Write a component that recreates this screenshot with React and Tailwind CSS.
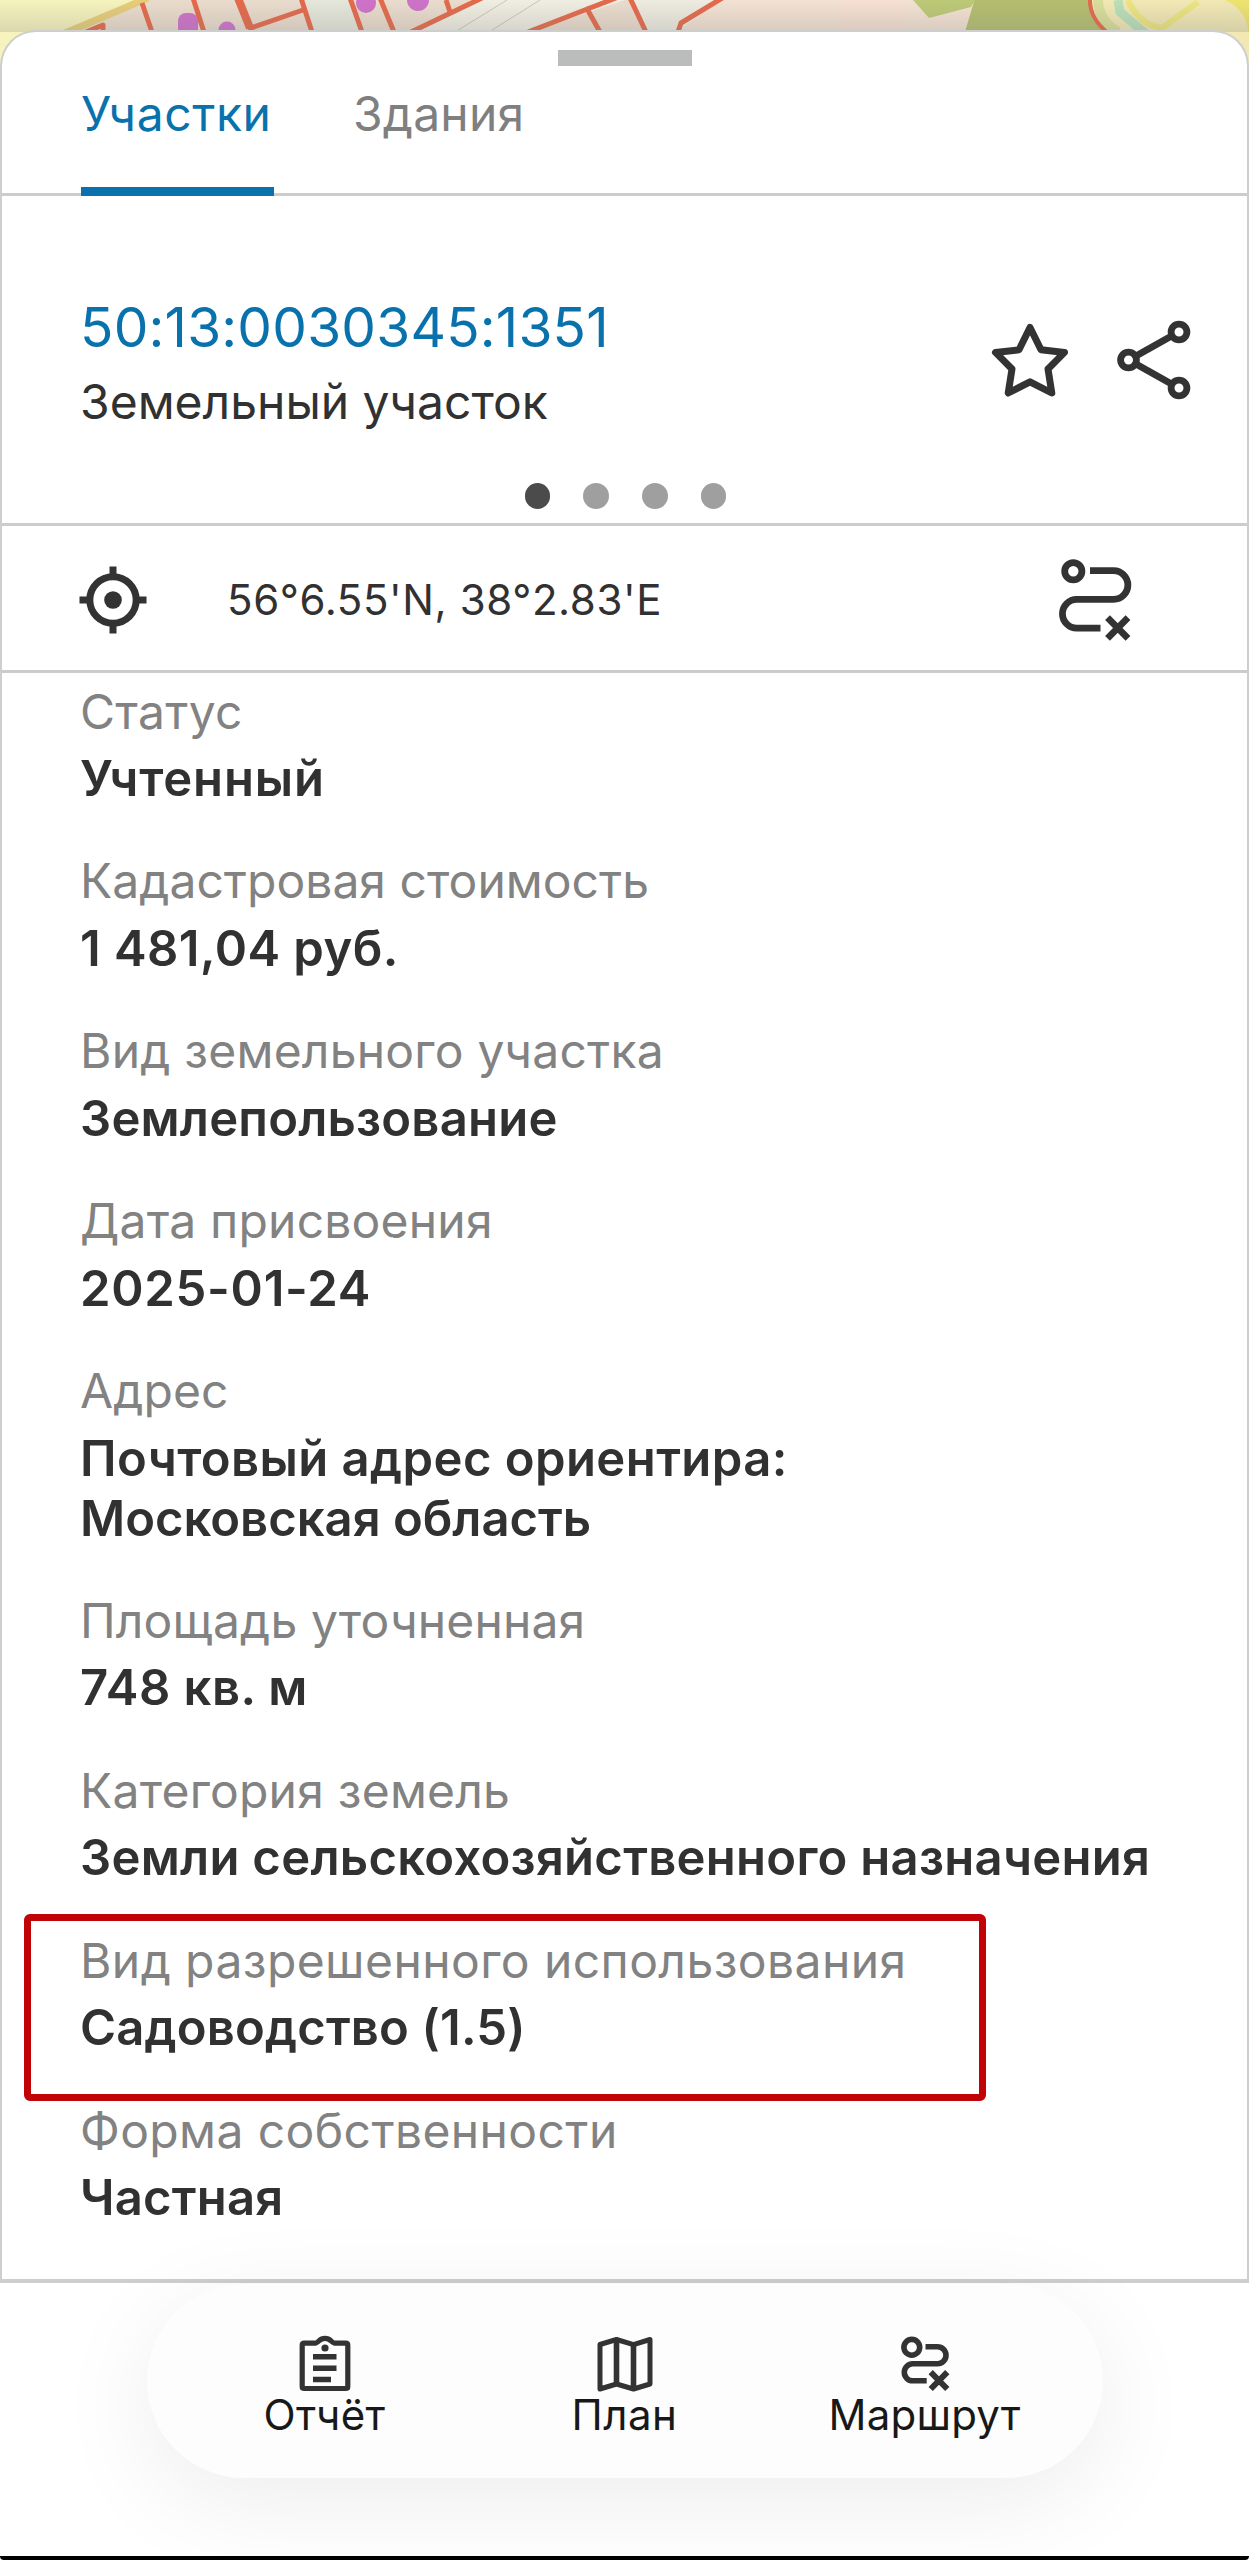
const fields = [
  { label: "Статус", ls: "tracking-[0.3px]", value: ["Учтенный"], vs: ["tracking-[0.85px]"] },
  { label: "Кадастровая стоимость", ls: "tracking-[0.03px]", value: ["1 481,04 руб."], vs: ["tracking-[0.44px]"] },
  { label: "Вид земельного участка", ls: "tracking-[0.22px]", value: ["Землепользование"], vs: ["tracking-[0.2px]"] },
  { label: "Дата присвоения", ls: "tracking-[0.2px]", value: ["2025-01-24"], vs: ["tracking-[0.72px]"] },
  {
    label: "Адрес",
    ls: "tracking-[0.1px]",
    value: ["Почтовый адрес ориентира:", "Московская область"],
    vs: ["tracking-[0.42px]", "tracking-[-0.02px]"],
  },
  { label: "Площадь уточненная", ls: "tracking-[0.14px]", value: ["748 кв. м"], vs: ["tracking-[0.45px]"] },
  { label: "Категория земель", ls: "tracking-[0.22px]", value: ["Земли сельскохозяйственного назначения"], vs: ["tracking-[0.27px]"] },
  {
    label: "Вид разрешенного использования",
    ls: "tracking-[0.42px]",
    value: ["Садоводство (1.5)"],
    vs: ["tracking-[0.16px]"],
    highlighted: true,
  },
  { label: "Форма собственности", ls: "tracking-[0.4px]", value: ["Частная"], vs: ["tracking-[0.2px]"] },
];

function MapStrip() {
  return (
    <svg viewBox="0 0 1249 80" className="block h-[80px] w-full shrink-0" aria-hidden="true">
      <defs>
        <linearGradient id="edge" x1="0" y1="0" x2="0" y2="1">
          <stop offset="0" stopColor="#777" stopOpacity="0" />
          <stop offset="1" stopColor="#777" stopOpacity="0.22" />
        </linearGradient>
      </defs>
      <rect width="1249" height="80" fill="#eadccd" />
      <path d="M0 0H145L70 30L0 80Z" fill="#f6f3bd" />
      <path d="M301 0H350L364 32H312Z" fill="#e6e7db" />
      <path d="M480 0H625L530 32H413Z" fill="#f0eee2" />
      <path d="M393 32L450 10L446 0H480L413 32Z" fill="#e9dccb" />
      <path d="M630 0H720L678 32H646Z" fill="#eeece0" />
      <path d="M720 0H975V32H678Z" fill="#f3e2d3" />
      <path d="M835 0H905V32H835Z" fill="#f7dfd3" opacity="0.7" />
      <path d="M913 0L929 18L971 7L975 0Z" fill="#bcc975" />
      <path d="M975 -2L965 32H1108L1089 0Z" fill="#b4be6e" />
      <path d="M1089 0L1094 17L1108 32L1249 80V0Z" fill="#f1e8b4" />
      <path d="M1098 0Q1098 20 1118 32" stroke="#d9dd9a" strokeWidth="10" fill="none" />
      <path d="M1118 0L1120 12L1146 34" stroke="#b9dfb8" strokeWidth="9" fill="none" />
      <path d="M1128 0Q1138 24 1162 28L1198 2" stroke="#ece57f" strokeWidth="6" fill="none" />
      <path d="M1225 0Q1249 10 1249 40V0Z" fill="#efe36f" />
      <path d="M148 -2L70 31L52 38" stroke="#e6cd78" strokeWidth="7" fill="none" />
      <g fill="#ce72c9">
        <rect x="178" y="13" width="20" height="26" rx="8" />
        <circle cx="227" cy="30" r="8.500" />
        <circle cx="366" cy="3" r="10" />
        <circle cx="418" cy="0" r="11" />
      </g>
      <path d="M455 32L507 0M489 32L540 0" stroke="#c9c6b6" strokeWidth="1" />
      <g stroke="#e4694b" strokeWidth="5" fill="none" strokeLinejoin="round">
        <path d="M142 3L152 32M86 32L103 25V32M193 -2L204 32M301 -2L312 32M350 -2L362 32M380 -2L394 32" />
        <path d="M238 -2L250 28" strokeWidth="8" />
        <path d="M248 29L303 10M411 32L482 -2M446 0L450 12M528 32L616 -2M586 7L600 32M630 -2L646 32M724 -3L681 23L678 32" />
        <path d="M1090 -2Q1089 18 1108 33" strokeWidth="4" />
      </g>
      <rect width="1249" height="32" fill="url(#edge)" />
    </svg>
  );
}

function StarIcon() {
  return (
    <svg viewBox="0 0 80 80" className="h-[80px] w-[80px]" fill="none" stroke="#333" strokeWidth="7" strokeLinejoin="round">
      <path d="M40 7.500L51 29.800L74.500 32.400L58 49L61.800 73L40 61.800L18.200 73L22 49L5.500 32.400L29 29.800Z" />
    </svg>
  );
}

function ShareIcon() {
  return (
    <svg viewBox="0 0 80 80" className="h-[80px] w-[80px]" fill="none" stroke="#333" strokeWidth="6.800">
      <circle cx="14.500" cy="40" r="7.900" />
      <circle cx="65" cy="12" r="7.900" />
      <circle cx="65" cy="68" r="7.900" />
      <path d="M21.500 36.200L58 15.800M21.500 43.800L58 64.200" />
    </svg>
  );
}

function RouteIcon() {
  return (
    <svg viewBox="0 0 80 90" className="h-[90px] w-[80px]" fill="none" stroke="#333" strokeWidth="6.800">
      <circle cx="18.300" cy="16.200" r="8.600" />
      <path d="M35 15.700H58.500A14.350 14.350 0 0 1 58.500 44.400H21.800A14.350 14.350 0 0 0 21.800 73.100H45.500" />
      <path d="M52.500 62.700L73 83.300M73 62.700L52.500 83.300" />
    </svg>
  );
}

function TargetIcon() {
  return (
    <svg viewBox="0 0 68 68" className="h-[68px] w-[68px]" fill="none" stroke="#333">
      <circle cx="34" cy="34" r="23.200" strokeWidth="7" />
      <circle cx="34" cy="34" r="8.800" fill="#333" stroke="none" />
      <path d="M34 0.500V9M34 59V67.500M0.500 34H9M59 34H67.500" strokeWidth="7" />
    </svg>
  );
}

function ReportIcon() {
  return (
    <svg viewBox="0 0 60 60" className="h-[60px] w-[60px]" fill="none" stroke="#333" strokeWidth="5.200" strokeLinejoin="round">
      <path d="M7.200 13.200Q7.200 11.200 9.200 11.200H20.500Q22.500 10.800 24 8.800Q26.500 6.300 30 6.300Q33.500 6.300 36 8.800Q37.500 10.800 39.500 11.200H50.800Q52.800 11.200 52.800 13.200V54.500Q52.800 56.500 50.800 56.500H9.200Q7.200 56.500 7.200 54.500Z" />
      <circle cx="30" cy="16" r="3.600" fill="#333" stroke="none" />
      <path d="M18 24.800H41.500M18 36.200H41.500M18 47.500H36" strokeWidth="5.600" />
    </svg>
  );
}

function PlanIcon() {
  return (
    <svg viewBox="0 0 60 60" className="h-[60px] w-[60px]" fill="none" stroke="#333" strokeWidth="5" strokeLinejoin="round">
      <path d="M5 12.500L21.500 7.500L38.500 12.700L55 7.500V52L38.500 57L21.500 52L5 57Z" />
      <path d="M21.500 7.500V52M38.500 12.700V57" strokeWidth="5.600" />
    </svg>
  );
}

function SmallRouteIcon() {
  return (
    <svg viewBox="0 0 60 60" className="h-[60px] w-[60px]" fill="none" stroke="#333" strokeWidth="5.600">
      <circle cx="16.800" cy="15.300" r="7.900" />
      <path d="M30.500 14.800H42.500A8.500 8.500 0 0 1 51 23.300A8.500 8.500 0 0 1 42.500 31.800H18A8.500 8.500 0 0 0 9.300 40.300A8.500 8.500 0 0 0 18 48.800H31.700" />
      <path d="M35.700 40.200L52.300 57M52.300 40.200L35.700 57" strokeWidth="6" />
    </svg>
  );
}

function Field({ label, ls, value, vs, highlighted }) {
  return (
    <div className="relative mb-[42.4px]">
      <dt className={`mb-[7.5px] text-[#828282] ${ls}`}>{label}</dt>
      <dd className="text-[49px] font-semibold text-[#313131]">
        {value.map((line, i) => (
          <div key={line} className={vs[i]}>{line}</div>
        ))}
      </dd>
      {highlighted && (
        <div className="absolute -left-[56px] -top-[17px] h-[187px] w-[962px] rounded-[6px] border-[7px] border-[#c10206]" />
      )}
    </div>
  );
}

export default function App() {
  return (
    <div className="flex h-[2560px] w-[1249px] flex-col overflow-hidden bg-white font-['Inter',sans-serif] text-[48px] leading-[60px] text-[#313131]">
      <MapStrip />

      <section className="-mt-[50px] flex h-[2253px] shrink-0 flex-col rounded-t-[36px] border-x-2 border-t-2 border-b-4 border-[#cdcfcf] bg-white">
        <div className="flex justify-center pt-[18px]">
          <div className="h-4 w-[134px] bg-[#bbbcbc]" />
        </div>

        <nav className="flex h-[130px] shrink-0 gap-[79px] border-b-3 border-[#cccccc] pl-[79px]">
          <div className="flex h-[130px] w-[193px] flex-col justify-between pt-[18px] tracking-[0.6px] text-[#0972ac]">
            <span>Участки</span>
            <span className="h-[9px] bg-[#0972ac]" />
          </div>
          <div className="pt-[18px] tracking-[0.2px] text-[#7f7f7f]">Здания</div>
        </nav>

        <header className="flex h-[330px] shrink-0 flex-col border-b-3 border-[#cccccc]">
          <div className="flex justify-between pl-[78px] pr-[53.500px] pt-[98px]">
            <div>
              <div className="mb-[12px] text-[55px] leading-[66px] tracking-[0.2px] text-[#0972ac]">50:13:0030345:1351</div>
              <div>Земельный участок</div>
            </div>
            <div className="flex gap-[44px] pt-[26px]">
              <StarIcon />
              <ShareIcon />
            </div>
          </div>
          <div className="mt-[51px] flex items-center justify-center gap-[33.300px] pl-[2px]">
            <span className="h-[25.500px] w-[25.500px] rounded-full bg-[#4b4b4b]" />
            <span className="h-[25.500px] w-[25.500px] rounded-full bg-[#9f9f9f]" />
            <span className="h-[25.500px] w-[25.500px] rounded-full bg-[#9f9f9f]" />
            <span className="h-[25.500px] w-[25.500px] rounded-full bg-[#9f9f9f]" />
          </div>
        </header>

        <div className="flex h-[147px] shrink-0 items-center border-b-3 border-[#cccccc] pl-[77px] pr-[112px] pt-[3px]">
          <TargetIcon />
          <span className="ml-[80px] flex-1 text-[42px] tracking-[0.6px]">56°6.55'N, 38°2.83'E</span>
          <RouteIcon />
        </div>

        <dl className="pl-[78px] pt-[8.500px]">
          {fields.map((field) => (
            <Field key={field.label} {...field} />
          ))}
        </dl>
      </section>

      <footer className="flex h-[273px] shrink-0 justify-center pt-px">
        <div className="grid h-[194px] w-[956px] grid-cols-3 rounded-full bg-[#fdfdfd] px-[28px] text-[42px] leading-[50px] text-[#181818] shadow-[0_24px_100px_rgba(0,0,0,0.075)]">
          <div className="flex flex-col items-center pt-[48px]">
            <ReportIcon />
            <span className="-mt-[2px] tracking-[0.4px]">Отчёт</span>
          </div>
          <div className="flex flex-col items-center pt-[48px]">
            <PlanIcon />
            <span className="-mt-[2px] tracking-[0.5px]">План</span>
          </div>
          <div className="flex flex-col items-center pt-[48px]">
            <SmallRouteIcon />
            <span className="-mt-[2px] tracking-[0.2px]">Маршрут</span>
          </div>
        </div>
      </footer>
      <div className="h-1 shrink-0 rounded-b-[4px] bg-black" />
    </div>
  );
}
